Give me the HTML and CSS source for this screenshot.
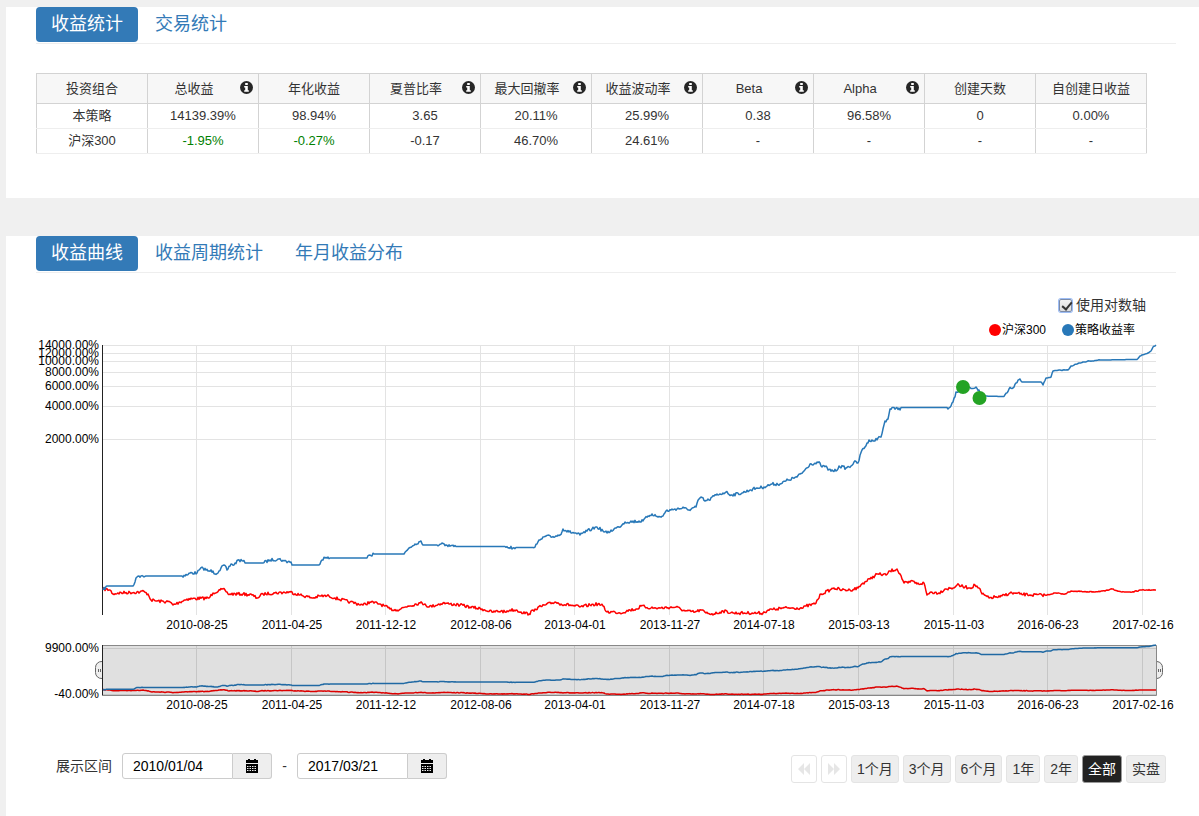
FILE: index.html
```html
<!DOCTYPE html>
<html lang="zh-CN">
<head>
<meta charset="utf-8">
<title>收益统计</title>
<link rel="stylesheet" href="styles.css">
</head>
<body>
<svg class="defs" aria-hidden="true">
  <symbol id="info" viewBox="0 0 13 13"><circle cx="6.5" cy="6.5" r="6.5" fill="#262626"/><path fill="#fff" d="M5.2 2h2.6v2H5.2zM4.2 5h3.6v4.2h1V10.800H4.200V9.200h1V6.600h-1z"/></symbol>
  <symbol id="cal" viewBox="0 0 14 14"><path d="M1 1h2V0h2v1h4V0h2v1h2v3H1zM1 5h12v9H1z"/><path stroke="#eee" stroke-width="1" stroke-dasharray="1.5 1" d="M2 7.500h10M2 9.500h10M2 11.500h10"/></symbol>
  <symbol id="back" viewBox="0 0 14 14"><path d="M7 1v12L1 7zM13 1v12L7 7z"/></symbol>
  <symbol id="fwd" viewBox="0 0 14 14"><path d="M1 1v12l6-6zM7 1v12l6-6z"/></symbol>
</svg>
<main class="page">
  <section class="panel">
    <nav class="tabs">
      <a class="tab active" href="#stats">收益统计</a>
      <a class="tab" href="#trades">交易统计</a>
    </nav>
    <table class="stats">
      <thead>
        <tr>
          <th>投资组合</th>
          <th><svg class="info"><use href="#info"/></svg>总收益</th>
          <th>年化收益</th>
          <th><svg class="info"><use href="#info"/></svg>夏普比率</th>
          <th><svg class="info"><use href="#info"/></svg>最大回撤率</th>
          <th><svg class="info"><use href="#info"/></svg>收益波动率</th>
          <th><svg class="info"><use href="#info"/></svg>Beta</th>
          <th><svg class="info"><use href="#info"/></svg>Alpha</th>
          <th>创建天数</th>
          <th>自创建日收益</th>
        </tr>
      </thead>
      <tbody>
        <tr><td>本策略</td><td>14139.39%</td><td>98.94%</td><td>3.65</td><td>20.11%</td><td>25.99%</td><td>0.38</td><td>96.58%</td><td>0</td><td>0.00%</td></tr>
        <tr><td>沪深300</td><td class="down">-1.95%</td><td class="down">-0.27%</td><td>-0.17</td><td>46.70%</td><td>24.61%</td><td>-</td><td>-</td><td>-</td><td>-</td></tr>
      </tbody>
    </table>
  </section>

  <section class="panel panel-chart">
    <nav class="tabs">
      <a class="tab active" href="#curve">收益曲线</a>
      <a class="tab" href="#period">收益周期统计</a>
      <a class="tab" href="#monthly">年月收益分布</a>
    </nav>
    <div class="options">
      <label class="log"><input class="check" type="checkbox" checked>使用对数轴</label>
    </div>
    <svg class="chart" id="chart" viewBox="36 320 1140 400" role="img" aria-label="收益曲线">
      <g id="grid"></g>
      <path class="axis" d="M102.500 345V615"/>
      <path class="line red" id="redMain"/>
      <path class="line blue" id="blueMain"/>
      <circle class="mark" cx="963" cy="387" r="7"/>
      <circle class="mark" cx="979.500" cy="398" r="7"/>
      <circle class="dot-red" cx="995" cy="330" r="6"/>
      <text x="1002" y="334">沪深300</text>
      <circle class="dot-blue" cx="1068" cy="330" r="6"/>
      <text x="1075" y="334">策略收益率</text>
      <rect class="brush" x="102" y="645" width="1055" height="50"/>
      <g id="miniGrid"></g>
      <path class="frame" d="M102 645.500H1156.500V695.500H102"/>
      <path class="axis" d="M102.500 645V695"/>
      <path class="line mini red-mini" id="redMini"/>
      <path class="line mini blue-mini" id="blueMini"/>
      <path class="handle" d="M102 661.500A6 6 0 0 0 95.500 667.500V672.500A6 6 0 0 0 102 678.500M98.500 669V672M100.500 669V672"/>
      <path class="handle" d="M1157 661.500A6 6 0 0 1 1162.500 667.500V672.500A6 6 0 0 1 1157 678.500M1158.500 669V672M1160.500 669V672"/>
    </svg>
    <form class="controls">
      <div class="range">
        <label for="from">展示区间</label>
        <div class="date"><input id="from" type="text" value="2010/01/04"><button type="button" aria-label="选择开始日期"><svg class="icon"><use href="#cal"/></svg></button></div>
        <span class="dash">-</span>
        <div class="date"><input type="text" value="2017/03/21" aria-label="结束日期"><button type="button" aria-label="选择结束日期"><svg class="icon"><use href="#cal"/></svg></button></div>
      </div>
      <div class="spans">
        <button class="btn step" type="button" aria-label="后退"><svg class="icon"><use href="#back"/></svg></button>
        <button class="btn step" type="button" aria-label="前进"><svg class="icon"><use href="#fwd"/></svg></button>
        <button class="btn" type="button">1个月</button>
        <button class="btn" type="button">3个月</button>
        <button class="btn" type="button">6个月</button>
        <button class="btn" type="button">1年</button>
        <button class="btn" type="button">2年</button>
        <button class="btn on" type="button">全部</button>
        <button class="btn" type="button">实盘</button>
      </div>
    </form>
  </section>
</main>
<script src="chart.js"></script>
</body>
</html>
```
FILE: styles.css
```css
* { box-sizing: border-box; }
body {
  margin: 0;
  background: #f0f0f0;
  color: #333;
  font: 14px/20px "Liberation Sans", "Noto Sans CJK SC", sans-serif;
}
.defs { display: none; }
.page {
  display: flex;
  flex-direction: column;
  gap: 38px;
  padding: 7px 0 0 6px;
}
.panel { background: #fff; padding: 0 23px 44px 30px; }
.panel-chart { padding-bottom: 33px; }

.tabs {
  display: flex;
  gap: 2px;
  padding-bottom: 1px;
  border-bottom: 1px solid #eee;
}
.tab {
  padding: 0 15px;
  border-radius: 4px;
  color: #337ab7;
  font-size: 18px;
  line-height: 35px;
  text-decoration: none;
}
.tab.active { background: #337ab7; color: #fff; }

.stats {
  width: 100%;
  max-width: 1111px;
  margin-top: 29px;
  border-collapse: collapse;
  table-layout: fixed;
  font-size: 13px;
  text-align: center;
}
.stats th, .stats td { padding: 0; border: 1px solid #d3d3d3; }
.stats th { height: 30px; background: #f7f7f7; font-weight: normal; }
.stats td { height: 25px; border-bottom-color: #eee; }
.stats tbody tr + tr td { border-top-color: #eee; }
.down { color: #008000; }
.info { float: right; width: 13px; height: 13px; margin: 2px 5px 0 0; }

.options {
  display: flex;
  justify-content: flex-end;
  padding: 22px 30px 5px 0;
}
.log { display: flex; align-items: center; gap: 4px; }
.check {
  appearance: none;
  position: relative;
  width: 13px;
  height: 13px;
  margin: 0;
  border: 1px solid #7c8ba8;
  border-radius: 2px;
  background: linear-gradient(#f2f2f2, #dcdcdc);
  box-shadow: 0 0 0 1px #9dbdf5;
}
.check::after {
  content: "";
  position: absolute;
  left: 4px;
  top: 0;
  width: 4px;
  height: 8px;
  border: solid #333;
  border-width: 0 2px 2px 0;
  transform: rotate(40deg);
}

.chart { display: block; width: 100%; height: auto; overflow: visible; }
.chart text { font-size: 12px; fill: #000; }
.chart .end { text-anchor: end; }
.chart .mid { text-anchor: middle; }
.grid { stroke: #e3e3e3; fill: none; }
.grid-mini { stroke: #c6c6c6; fill: none; }
.axis { stroke: #222; fill: none; }
.line { fill: none; stroke-width: 1.5px; stroke-linejoin: round; }
.red { stroke: #f00; }
.blue { stroke: #2878b8; }
.red-mini { stroke: #dc0000; }
.blue-mini { stroke: #2069a3; }
.mark { fill: #24a324; }
.dot-red { fill: #f00; }
.dot-blue { fill: #2878b8; }
.brush { fill: #e0e0e0; }
.frame { fill: none; stroke: #888; }
.handle { fill: #eee; stroke: #666; }

.controls {
  display: flex;
  justify-content: space-between;
  align-items: flex-start;
  margin: 0 10px 0 20px;
  padding-top: 33px;
}
.range, .spans, .date { display: flex; }
.range { align-items: center; }
.range label { margin-right: 10px; }
.dash { width: 25px; text-align: center; }
.date input {
  width: 111px;
  height: 26px;
  padding: 0 10px;
  border: 1px solid #ccc;
  border-radius: 3px 0 0 3px;
  background: #fff;
  color: #000;
  font: inherit;
}
.date button {
  display: flex;
  align-items: center;
  justify-content: center;
  width: 39px;
  padding: 0;
  border: 1px solid #ccc;
  border-left: 0;
  border-radius: 0 3px 3px 0;
  background: #eee;
}
.icon { display: block; width: 14px; height: 14px; fill: #000; }
.spans { gap: 4px; margin-top: 2px; }
.btn {
  height: 28px;
  padding: 0 5px;
  border: 1px solid #e4e4e4;
  border-radius: 3px;
  background: #eee;
  color: #333;
  font: inherit;
}
.btn.step { padding: 0 5px; background: #fff; }
.step .icon { fill: #e6e6e6; }
.btn.on { background: #222; border-color: #999; color: #fff; }
```
FILE: chart.js
```js
const blue = "103,590 107,586 133,586 136,578 139,576 144,577 146,576 182,576 187,575 190,573 197,573 200,569 203,568 208,571 213,571 215,574 219,571 224,565 227,570 231,564 234,565 238,560 243,561 245,563 263,563 270,560 279,559 284,561 291,562 292,565 319,565 322,560 325,558 330,558 367,558 370,555 374,554 404,554 409,548 415,544 421,541 424,545 437,545 442,543 446,545 456,546.500 505,546.500 513,548 516,547.500 533,547.500 537,544 540,540 546,536 551,537 560,535 563,529 569,532 575,533 580,535 587,531 592,529 597,527 603,531 607,533 614,529 619,527 625,522 643,521 648,516 652,514 658,517 663,516 666,511 671,510 675,509 684,508 688,510 696,507 699,499 701,497 705,501 709,500 714,496 720,494 726,492 731,495 742,493 750,490 757,488 764,487 772,484 780,484 788,480 797,477 803,472 810,464 820,463 822,467 826,466 828,470 836,471 839,466 846,468 851,466 854,462 858,463 862,450 868,443 869,440 872,440 874,441 878,438 881,437 885,421 888,419 890,409 896,408 899,408 900,410 901,407.500 947,407.500 948,409 953,402 956,392 960,390 963,387 975,388 979,390 981,396 1004,396.500 1009,389 1013,388 1020,379 1022,382 1041,382 1043,385 1046,378 1051,377 1053,371 1063,370 1068,370 1071,366 1083,362 1090,361 1100,360 1137,359.500 1140,356 1148,353 1151,351 1153,347 1156,345";
const red = "103,589 110,590 113,594 118,593 140,592 142,591 148,594 151,600 157,601 170,602 173,605 180,602 187,599 209,598 213,593 220,590 225,590 228,594 243,594 252,595 257,598 263,594 275,593 290,592 300,595 313,598 320,596 329,596 335,598 350,602 363,605 370,602 380,604 390,609 397,610 408,606 420,603 425,604 429,607 443,603 450,604 460,605 470,607 482,609 492,612 501,611 505,612 510,610 516,610 521,612 529,614 535,609 545,605 555,602 561,604 570,605 580,607 590,605 598,604 603,606 607,612 615,612 620,613 630,610 637,609 641,606 651,608 661,608 676,607 685,611 695,612 701,610 706,613 714,614 723,611 733,613 752,613 763,613 768,610 777,609 783,608 788,608 803,608 806,606 815,604 821,594 830,590 834,588 842,590 850,590 858,588 863,583 870,579 877,574 886,575 890,571 897,569 900,574 904,583 908,583 913,581 917,584 924,583 927,595 931,592 939,593 945,589 953,588 957,585 965,587 970,588 975,585 979,588 982,594 989,598 995,597 1000,597 1010,593 1020,594 1030,595 1047,595 1055,593 1065,594 1071,591 1088,592 1105,591 1112,589 1122,592 1132,592 1142,590 1156,590";

// A day-by-day series between the anchors; long flat runs stay flat.
function series(text, size, keepFlat) {
  let seed = 7;
  const random = () => (seed = (seed * 16807) % 2147483647) / 2147483647 - 0.5;
  const anchors = text.split(" ").map(p => p.split(",").map(Number));
  const out = [anchors[0]];
  for (let i = 1; i < anchors.length; i++) {
    const [x0, y0] = anchors[i - 1];
    const [x1, y1] = anchors[i];
    const flat = keepFlat && Math.abs(y1 - y0) <= 0.5 && x1 - x0 > 10;
    const noise = flat ? 0 : x0 > 1040 ? size * 0.3 : size;
    for (let x = x0 + 1; x < x1; x++) {
      out.push([x, y0 + (y1 - y0) * (x - x0) / (x1 - x0) + random() * noise]);
    }
    out.push([x1, y1]);
  }
  return out;
}
const path = (points, y) => "M" + points.map(p => p[0] + " " + y(p[1]).toFixed(1)).join("L");
const mainY = v => v;
const miniY = v => 690 + (v - 590) * 45 / 245;
const byId = id => document.getElementById(id);

const blueSeries = series(blue, 3, true);
const redSeries = series(red, 3, false);
byId("blueMain").setAttribute("d", path(blueSeries, mainY));
byId("redMain").setAttribute("d", path(redSeries, mainY));
byId("blueMini").setAttribute("d", path(blueSeries, miniY));
byId("redMini").setAttribute("d", path(redSeries, miniY));

const dates = [[196, "2010-08-25"], [291, "2011-04-25"], [385, "2011-12-12"], [480, "2012-08-06"], [574, "2013-04-01"], [669, "2013-11-27"], [763, "2014-07-18"], [858, "2015-03-13"], [953, "2015-11-03"], [1047, "2016-06-23"], [1142, "2017-02-16"]];
const levels = [[345, "14000.00%"], [353, "12000.00%"], [361, "10000.00%"], [372, "8000.00%"], [386, "6000.00%"], [406, "4000.00%"], [439, "2000.00%"]];

byId("grid").innerHTML =
  levels.map(([y, t]) => `<path class="grid" d="M103 ${y + 0.5}H1156"/><text class="end" x="99" y="${y + 4}">${t}</text>`).join("") +
  dates.map(([x, t]) => `<path class="grid" d="M${x + 0.5} 345V615"/><text class="mid" x="${x + 1}" y="629">${t}</text>`).join("");
byId("miniGrid").innerHTML =
  [[648, "9900.00%"], [694, "-40.00%"]].map(([y, t]) => `<path class="grid-mini" d="M103 ${y + 0.5}H1156"/><text class="end" x="99" y="${y + 4}">${t}</text>`).join("") +
  dates.map(([x, t]) => `<path class="grid-mini" d="M${x + 0.5} 645V695"/><text class="mid" x="${x + 1}" y="709">${t}</text>`).join("");
```
